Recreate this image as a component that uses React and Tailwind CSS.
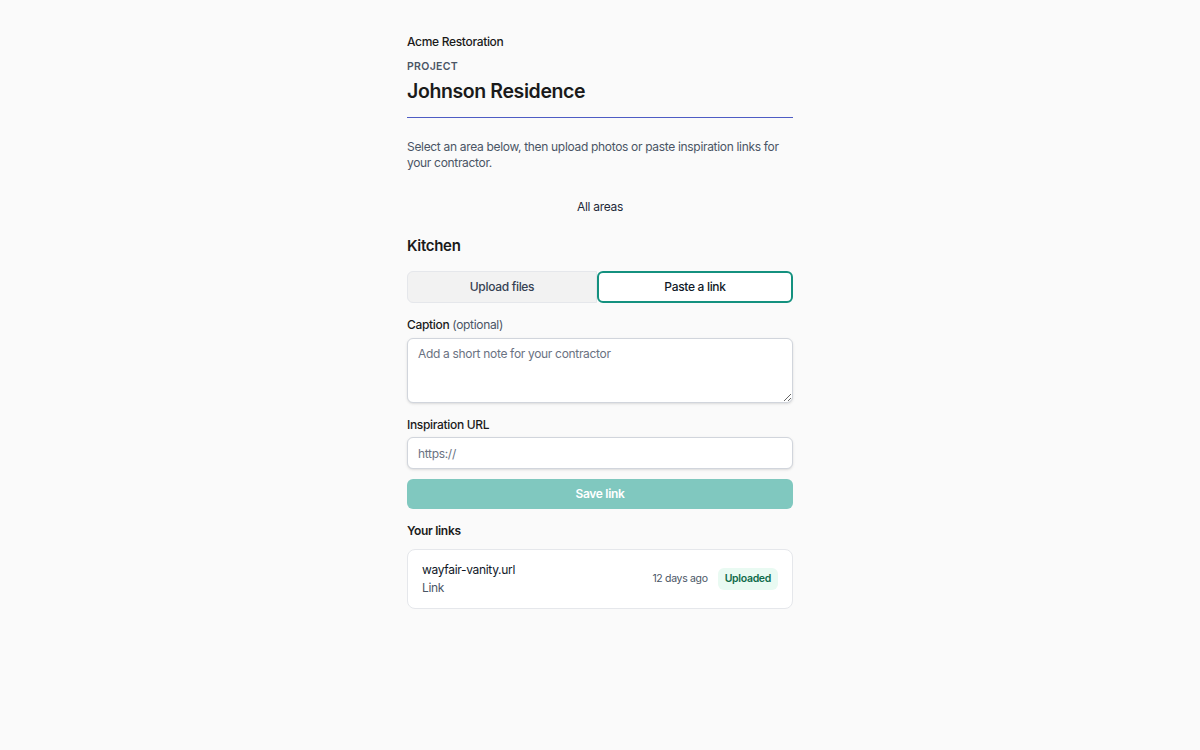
import React from "react";

// Upload page: project header, area picker, link form and saved links
const savedLinks = [
  { id: 1, name: "wayfair-vanity.url", kind: "Link", when: "12 days ago", status: "Uploaded" },
];

export default function App() {
  return (
    <div
      className="min-h-screen bg-[#fafafa] text-[#1a1a1a] tracking-[-0.02em]"
      style={{ fontFamily: "Inter, 'Noto Sans', 'Liberation Sans', sans-serif" }}
    >
      <div className="w-[386px] mx-auto pt-[34px]">
        <div className="text-[12px] font-medium leading-4">Acme Restoration</div>
        <div className="mt-[9px] text-[10.5px] font-semibold tracking-[0.03em] text-gray-600 leading-4">
          PROJECT
        </div>
        <h1 className="mt-[4px] text-[19.5px] font-semibold leading-6 tracking-[-0.02em]">
          Johnson Residence
        </h1>
        <div className="mt-[14px] h-px bg-[#4e5cc4]" />

        <p className="mt-[21px] text-[12px] leading-4 text-gray-600">
          Select an area below, then upload photos or paste inspiration links for your contractor.
        </p>

        <div className="mt-[28px] text-center text-[12px] leading-4 text-gray-800">All areas</div>

        <h2 className="mt-[21px] text-[15px] font-semibold leading-5">Kitchen</h2>

        <div className="mt-[15px] grid grid-cols-[190px_1fr]">
          <button className="h-[32px] rounded-l-md border border-gray-200 bg-[#f2f2f2] text-[12px] font-medium text-gray-700">
            Upload files
          </button>
          <button className="h-[32px] rounded-md border-2 border-[#14917f] bg-white text-[12px] font-medium text-gray-900">
            Paste a link
          </button>
        </div>

        <label className="mt-[14px] block text-[12px] font-medium leading-4">
          Caption <span className="font-normal text-gray-600">(optional)</span>
        </label>
        <textarea
          className="mt-[5px] block w-full h-[65px] rounded-md border border-gray-300 bg-white px-[10px] py-[7px] text-[12px] leading-4 shadow-sm placeholder:text-gray-500 outline-none"
          placeholder="Add a short note for your contractor"
        />

        <label className="mt-[14px] block text-[12px] font-medium leading-4">Inspiration URL</label>
        <input
          className="mt-[4px] block w-full h-[32px] rounded-md border border-gray-300 bg-white px-[10px] text-[12px] shadow-sm placeholder:text-gray-500 outline-none"
          placeholder="https://"
        />

        <button className="mt-[10px] w-full h-[30px] rounded-md bg-[#80c8bf] text-[12px] font-semibold text-white">
          Save link
        </button>

        <div className="mt-[14px] text-[12px] font-semibold leading-4">Your links</div>

        <div className="mt-[10px] flex flex-col gap-2">
          {savedLinks.map((l) => (
            <div
              key={l.id}
              className="flex items-center justify-between rounded-lg border border-gray-200 bg-white pl-[14px] pr-[14px] h-[60px]"
            >
              <div>
                <div className="text-[12px] leading-[18px] text-gray-900">{l.name}</div>
                <div className="text-[12px] leading-[18px] text-gray-600">{l.kind}</div>
              </div>
              <div className="flex items-center gap-[10px]">
                <span className="text-[10.5px] text-gray-600">{l.when}</span>
                <span className="rounded-md bg-[#e9faf2] px-[7px] py-[3px] text-[10.5px] font-semibold text-[#0f6b4a]">
                  {l.status}
                </span>
              </div>
            </div>
          ))}
        </div>
      </div>
    </div>
  );
}
